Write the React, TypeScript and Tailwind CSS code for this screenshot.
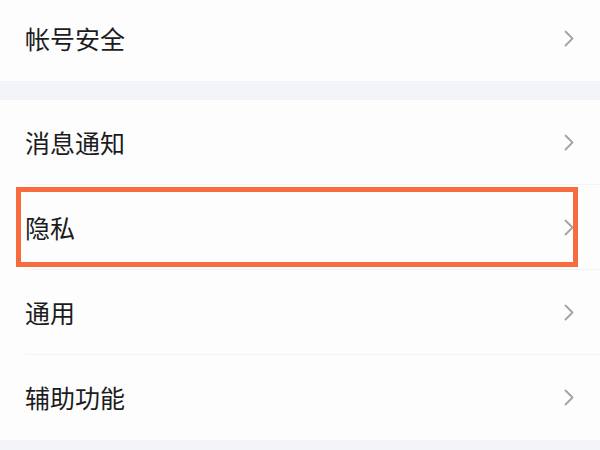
import React from 'react';

type Item = { label: string; highlight?: boolean };

const groups: Item[][] = [
  [{ label: '帐号安全' }],
  [{ label: '消息通知' }, { label: '隐私', highlight: true }, { label: '通用' }, { label: '辅助功能' }],
];

function Chevron() {
  return (
    <svg width="10" height="17" viewBox="0 0 10 17" fill="none" className="shrink-0">
      <path d="M1.5 1.5L8.5 8.5L1.5 15.5" stroke="#a3a3a8" strokeWidth="1.8" strokeLinecap="round" strokeLinejoin="round" />
    </svg>
  );
}

function Row({ item, last }: { item: Item; last: boolean }) {
  return (
    <div className="relative h-[85px] pl-[26px]">
      <div className={`flex h-full items-center justify-between pr-[26px] ${last ? '' : 'border-b border-[#f3f4f6]'}`}>
        <span className="text-[25px] leading-none text-[#1c1c1e] -ml-px">{item.label}</span>
        <Chevron />
      </div>
      {item.highlight && (
        <div className="pointer-events-none absolute left-[16px] right-[22px] top-[2px] bottom-[3px] border-[5px] border-[#f76b3e]" />
      )}
    </div>
  );
}

export default function App() {
  return (
    <div
      className="h-[450px] w-[600px] overflow-hidden bg-[#f3f4f7]"
      style={{ fontFamily: '"Noto Sans CJK SC", "Noto Sans", sans-serif' }}
    >
      <div className="flex flex-col gap-[19px]">
        {groups.map((g, gi) => (
          <div key={gi} className={`bg-[#fdfdfd] ${gi === 0 ? '-mt-[4px]' : ''}`}>
            {g.map((item, i) => (
              <Row key={item.label} item={item} last={i === g.length - 1} />
            ))}
          </div>
        ))}
      </div>
    </div>
  );
}
